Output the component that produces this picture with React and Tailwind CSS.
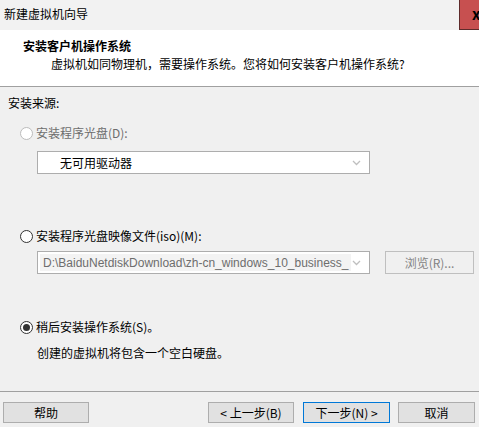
const font = "font-['Microsoft_YaHei','Noto_Sans_CJK_SC',sans-serif]";

const Radio = ({ checked = false, disabled = false }) => (
  <span
    className={`flex h-[13px] w-[13px] shrink-0 items-center justify-center rounded-full border bg-white ${
      disabled ? "border-[#bcbcbc]" : "border-[#333333]"
    }`}
  >
    {checked && <span className="h-[7px] w-[7px] rounded-full bg-[#333333]" />}
  </span>
);

const Chevron = () => (
  <svg width="9" height="6" viewBox="0 0 9 6" className="shrink-0">
    <path d="M1 1 L4.5 4.5 L8 1" fill="none" stroke="#bfbfbf" strokeWidth="1.3" />
  </svg>
);

const Button = ({ children, primary = false, className = "" }) => (
  <div
    className={`flex h-[21px] items-center justify-center border bg-[#e1e1e1] text-[12px] leading-none text-black ${
      primary ? "border-[#0078d7]" : "border-[#adadad]"
    } ${className}`}
  >
    {children}
  </div>
);

export default function App() {
  return (
    <div className={`flex h-[427px] w-[479px] flex-col overflow-hidden bg-[#f0f0f0] text-[12px] ${font}`}>
      {/* title bar */}
      <div className="flex h-[30px] shrink-0 items-start justify-between bg-[#f2f2f2]">
        <span className="pl-[4px] pt-[6px] leading-[16px] text-black">新建虚拟机向导</span>
        <div className="h-[30px] w-[20px] overflow-hidden border-b border-l border-[#5e2b2b] bg-[#c75050] pl-[12px] pt-[5px] text-[15px] font-bold leading-[18px] text-black">
          x
        </div>
      </div>

      {/* header */}
      <div className="h-[57px] shrink-0 border-b border-[#a0a0a0] bg-white">
        <div className="pl-[23px] pt-[8px] font-bold leading-[16px] text-black">安装客户机操作系统</div>
        <div className="pl-[51px] pt-[2px] leading-[16px] text-black">
          虚拟机如同物理机，需要操作系统。您将如何安装客户机操作系统?
        </div>
      </div>

      {/* body */}
      <div className="flex h-[304px] shrink-0 flex-col">
        <div className="mt-[8px] pl-[8px] leading-[16px] text-black">安装来源:</div>

        <div className="mt-[14px] flex items-center gap-[3px] pl-[20px] leading-[16px] text-[#6d6d6d]">
          <Radio disabled />
          <span>安装程序光盘(D):</span>
        </div>
        <div className="ml-[37px] mt-[10px] flex h-[23px] w-[333px] items-center justify-between border border-[#adadad] bg-white pl-[22px] pr-[8px]">
          <span className="leading-none text-black">无可用驱动器</span>
          <Chevron />
        </div>

        <div className="mt-[54px] flex items-center gap-[3px] pl-[20px] leading-[16px] text-black">
          <Radio />
          <span>安装程序光盘映像文件(iso)(M):</span>
        </div>
        <div className="mt-[7px] flex items-center gap-[15px] pl-[37px]">
          <div className="flex h-[23px] w-[333px] items-center justify-between border border-[#adadad] bg-white pl-[2px] pr-[8px]">
            <span className="flex h-[17px] w-[311px] items-center overflow-hidden whitespace-nowrap bg-[#f3f3f3] pl-[3px] font-['Liberation_Sans',Arial,sans-serif] text-[12px] leading-none text-[#6d6d6d]">
              D:\BaiduNetdiskDownload\zh-cn_windows_10_business_
            </span>
            <Chevron />
          </div>
          <div className="flex h-[23px] w-[89px] items-center justify-center border border-[#bfbfbf] bg-[#f0f0f0] leading-none text-[#838383]">
            浏览(R)...
          </div>
        </div>

        <div className="mt-[45px] flex items-center gap-[3px] pl-[20px] leading-[16px] text-black">
          <Radio checked />
          <span>稍后安装操作系统(S)。</span>
        </div>
        <div className="mt-[10px] pl-[37px] leading-[16px] text-black">创建的虚拟机将包含一个空白硬盘。</div>
      </div>

      {/* footer */}
      <div className="h-[36px] shrink-0 border-t border-[#a0a0a0]">
        <div className="mt-[10px] flex items-center">
          <Button className="ml-[3px] w-[86px]">帮助</Button>
          <Button className="ml-[119px] w-[86px]">&lt; 上一步(B)</Button>
          <Button primary className="ml-[9px] w-[87px]">下一步(N) &gt;</Button>
          <Button className="ml-[8px] w-[77px]">取消</Button>
        </div>
      </div>
    </div>
  );
}
